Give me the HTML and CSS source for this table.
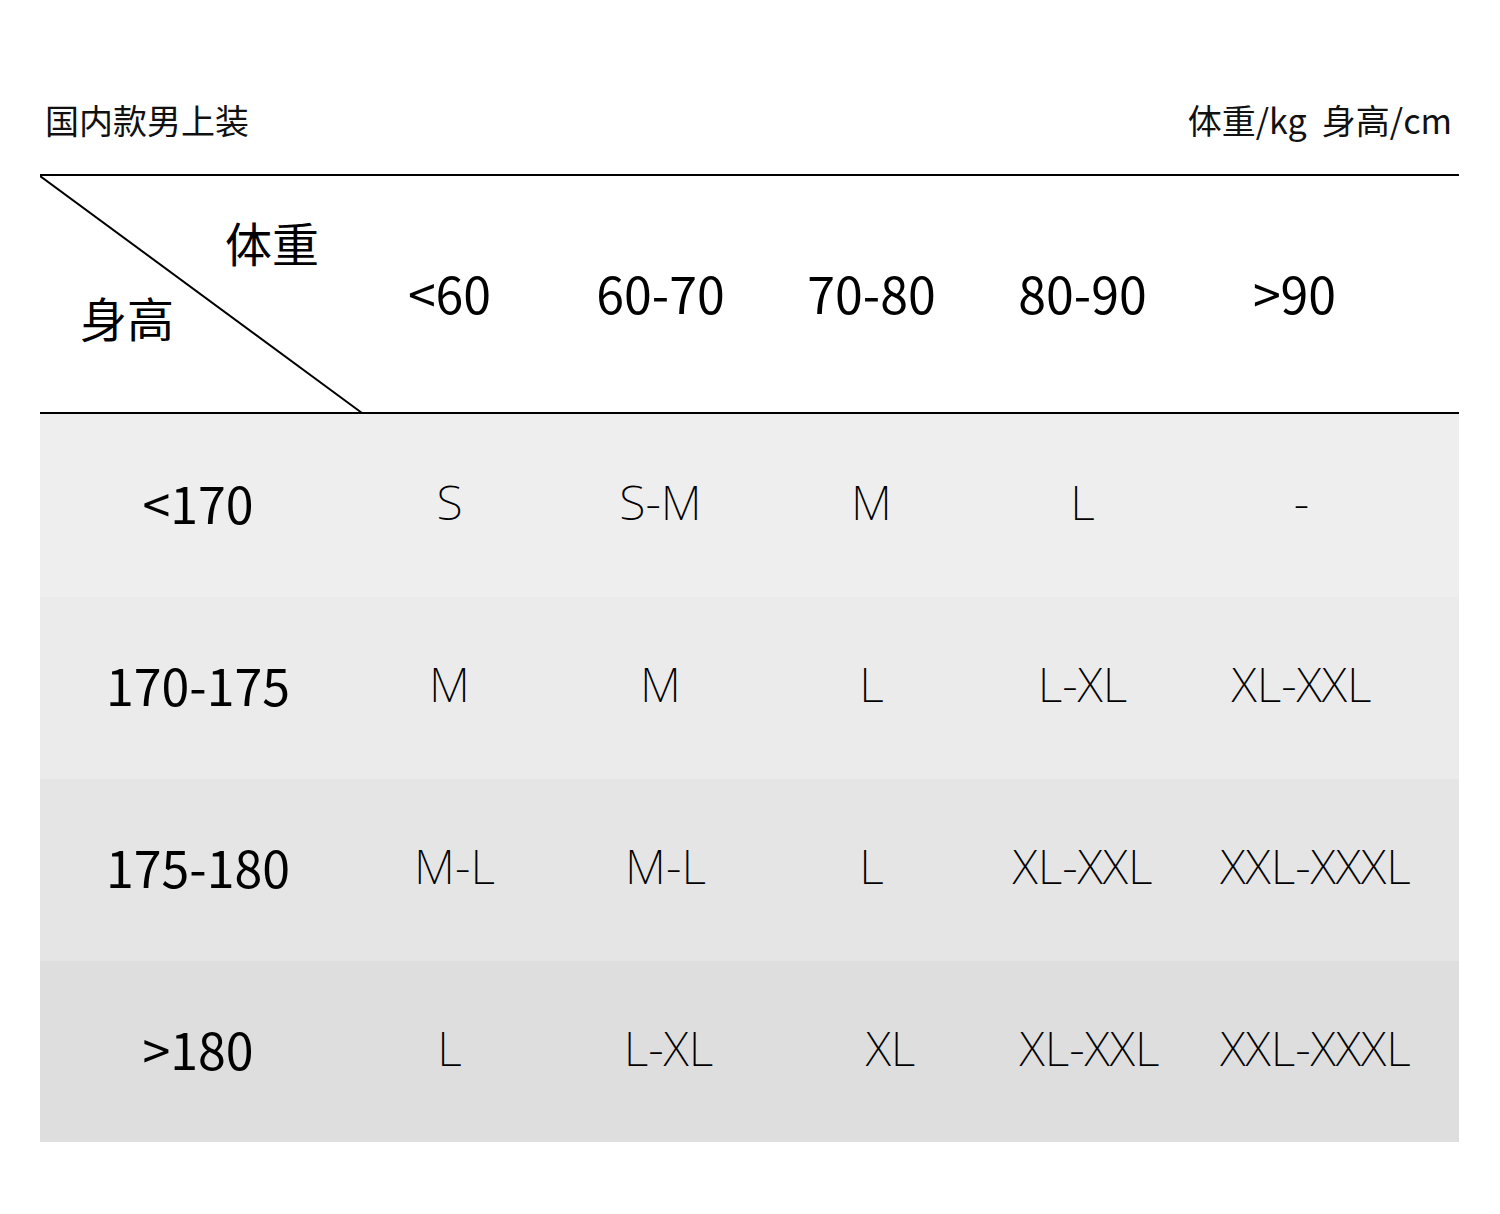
FILE: index.html
```html
<!DOCTYPE html>
<html lang="zh-CN">
<head>
<meta charset="utf-8">
<title>国内款男上装</title>
<link rel="stylesheet" href="styles.css">
</head>
<body>
<div class="page">
  <div class="caption">
    <span class="caption-left">国内款男上装</span>
    <span class="caption-right">体重/kg&nbsp;&nbsp;身高/cm</span>
  </div>
  <div class="size-table">
    <div class="row head">
      <div class="cell corner">
        <svg class="diag" width="323" height="239" viewBox="0 0 323 239"><line x1="0" y1="0" x2="322" y2="237" stroke="#000" stroke-width="2"/></svg>
        <span class="corner-top">体重</span>
        <span class="corner-bottom">身高</span>
      </div>
      <div class="cell hnum">&lt;60</div>
      <div class="cell hnum">60-70</div>
      <div class="cell hnum">70-80</div>
      <div class="cell hnum">80-90</div>
      <div class="cell hnum">&gt;90</div>
    </div>
    <div class="row body r1">
      <div class="cell label">&lt;170</div>
      <div class="cell size">S</div>
      <div class="cell size">S-M</div>
      <div class="cell size">M</div>
      <div class="cell size">L</div>
      <div class="cell size">-</div>
    </div>
    <div class="row body r2">
      <div class="cell label">170-175</div>
      <div class="cell size">M</div>
      <div class="cell size">M</div>
      <div class="cell size">L</div>
      <div class="cell size">L-XL</div>
      <div class="cell size">XL-XXL</div>
    </div>
    <div class="row body r3">
      <div class="cell label">175-180</div>
      <div class="cell size">M-L</div>
      <div class="cell size">M-L</div>
      <div class="cell size">L</div>
      <div class="cell size">XL-XXL</div>
      <div class="cell size wide">XXL-XXXL</div>
    </div>
    <div class="row body r4">
      <div class="cell label">&gt;180</div>
      <div class="cell size">L</div>
      <div class="cell size">L-XL</div>
      <div class="cell size">XL</div>
      <div class="cell size">XL-XXL</div>
      <div class="cell size wide">XXL-XXXL</div>
    </div>
  </div>
</div>
</body>
</html>
```
FILE: styles.css
```css
* { box-sizing: border-box; }
html, body { margin: 0; padding: 0; background: #fff; }
body {
  font-family: "Noto Sans CJK SC", "Noto Sans", sans-serif;
  color: #000;
}
.page {
  width: 1500px;
  height: 1214px;
  padding: 0 41px 0 40px;
}
.caption {
  height: 174px;
  display: flex;
  justify-content: space-between;
  align-items: flex-start;
  padding: 96px 7px 0 5px;
  font-size: 34px;
  line-height: 48px;
  color: #111;
}
.size-table {
  width: 1419px;
  border-top: 2px solid #000;
}
.row {
  display: grid;
  grid-template-columns: 304px 211px 211px 211px 211px 1fr;
  align-items: center;
}
.head {
  position: relative;
  height: 238px;
  border-bottom: 2px solid #000;
}
.cell {
  text-align: center;
  white-space: nowrap;
}
.corner {
  height: 100%;
}
.diag {
  position: absolute;
  left: 0;
  top: 0;
}
.corner-top, .corner-bottom {
  position: absolute;
  font-size: 47px;
  font-weight: 400;
  line-height: 60px;
}
.corner-top { left: 185px; top: 36px; }
.corner-bottom { left: 40px; top: 111px; }
.hnum {
  font-size: 50px;
  line-height: 60px;
  padding-bottom: 4px;
}
.head .hnum:last-child { padding-right: 58px; }
.body { height: 182px; }
.body .cell { padding-bottom: 8px; }
.r1 { height: 183px; background: #eeeeee; }
.r2 { background: #ebebeb; }
.r3 { background: #e5e5e5; }
.r4 { height: 181px; background: #dedede; }
.label {
  font-size: 50px;
  font-weight: 400;
  line-height: 60px;
}
.body .label { padding-left: 12px; }
.size {
  font-family: "Noto Sans", sans-serif;
  font-size: 48px;
  font-weight: 200;
  line-height: 60px;
}
.body .size:last-child { padding-right: 44px; }
.body .size.wide:last-child { padding-right: 16px; }
.r3 .size:nth-child(2), .r3 .size:nth-child(3) { padding-left: 10px; }
.r4 .size:nth-child(3) { padding-left: 16px; }
.r4 .size:nth-child(4) { padding-left: 38px; }
.r4 .size:nth-child(5) { padding-left: 14px; }
```
